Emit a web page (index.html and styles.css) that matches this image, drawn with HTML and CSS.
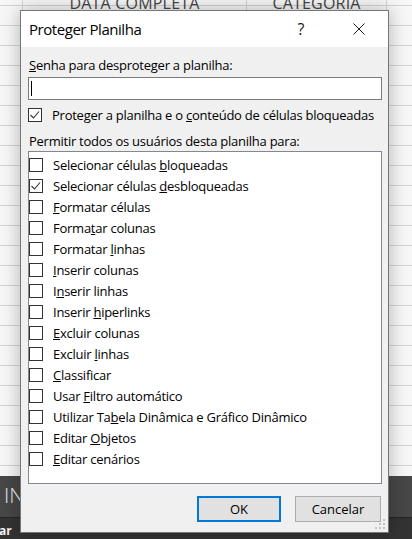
FILE: index.html
```html
<!DOCTYPE html>
<html lang="pt">
<head>
<meta charset="utf-8">
<title>Proteger Planilha</title>
<link rel="stylesheet" href="styles.css">
</head>
<body>
<div class="sheet">
  <div class="grid">
    <div class="col c0"></div>
    <div class="col c1"><span class="hdr">DATA COMPLETA</span></div>
    <div class="col c2"><span class="hdr">CATEGORIA</span></div>
    <div class="col c3"></div>
  </div>
  <div class="ribbon"><span class="ribbon-text">IN</span></div>
  <div class="statusbar"><span class="status-text">ar</span></div>
</div>

<div class="dialog">
  <div class="titlebar">
    <span class="title">Proteger Planilha</span>
    <span class="tb-btn help">?</span>
    <span class="tb-btn close">
      <svg width="12" height="12" viewBox="0 0 12 12"><path d="M0.5 0.5 L11.5 11.5 M11.5 0.5 L0.5 11.5" stroke="#1a1a1a" stroke-width="1" fill="none"/></svg>
    </span>
  </div>
  <div class="body">
    <div class="label"><u>S</u>enha para desproteger a planilha:</div>
    <div class="input"><span class="caret"></span></div>
    <div class="check-row">
      <span class="cb"><svg width="14" height="14" viewBox="0 0 14 14"><path d="M2.5 7 L5.5 10 L11 3.5" stroke="#333" stroke-width="1.1" fill="none"/></svg></span>
      <span>Proteger a planilha e o <u>c</u>onteúdo de células bloqueadas</span>
    </div>
    <div class="label permit">Permitir todos os usuários desta planilha para:</div>
    <div class="list">
      <div class="item"><span class="cb"></span><span>Selecionar células <u>b</u>loqueadas</span></div>
      <div class="item"><span class="cb"><svg width="14" height="14" viewBox="0 0 14 14"><path d="M2.5 7 L5.5 10 L11 3.5" stroke="#333" stroke-width="1.1" fill="none"/></svg></span><span>Selecionar células <u>d</u>esbloqueadas</span></div>
      <div class="item"><span class="cb"></span><span><u>F</u>ormatar células</span></div>
      <div class="item"><span class="cb"></span><span>Forma<u>t</u>ar colunas</span></div>
      <div class="item"><span class="cb"></span><span>Formatar <u>l</u>inhas</span></div>
      <div class="item"><span class="cb"></span><span><u>I</u>nserir colunas</span></div>
      <div class="item"><span class="cb"></span><span>I<u>n</u>serir linhas</span></div>
      <div class="item"><span class="cb"></span><span>Inserir <u>h</u>iperlinks</span></div>
      <div class="item"><span class="cb"></span><span><u>E</u>xcluir colunas</span></div>
      <div class="item"><span class="cb"></span><span>Excluir <u>l</u>inhas</span></div>
      <div class="item"><span class="cb"></span><span><u>C</u>lassificar</span></div>
      <div class="item"><span class="cb"></span><span>Usar <u>F</u>iltro automático</span></div>
      <div class="item"><span class="cb"></span><span>Utilizar Ta<u>b</u>ela Dinâmica e Gráfico Dinâmico</span></div>
      <div class="item"><span class="cb"></span><span>Editar <u>O</u>bjetos</span></div>
      <div class="item"><span class="cb"></span><span><u>E</u>ditar cenários</span></div>
    </div>
    <div class="footer">
      <span class="btn default">OK</span>
      <span class="btn">Cancelar</span>
    </div>
  </div>
  <svg class="grip" width="12" height="12" viewBox="0 0 12 12">
    <rect x="8" y="0" width="2" height="2" fill="#c2c2c2"/>
    <rect x="4" y="4" width="2" height="2" fill="#c2c2c2"/>
    <rect x="8" y="4" width="2" height="2" fill="#c2c2c2"/>
    <rect x="0" y="8" width="2" height="2" fill="#c2c2c2"/>
    <rect x="4" y="8" width="2" height="2" fill="#c2c2c2"/>
    <rect x="8" y="8" width="2" height="2" fill="#c2c2c2"/>
  </svg>
</div>
</body>
</html>
```
FILE: styles.css
```css
* { box-sizing: border-box; }
html, body { margin: 0; padding: 0; }
body {
  width: 412px;
  height: 539px;
  overflow: hidden;
  position: relative;
  font-family: "Open Sans", "Noto Sans", sans-serif;
  background: #fff;
}

/* background spreadsheet */
.sheet {
  height: 539px;
  display: flex;
  flex-direction: column;
}
.grid {
  height: 476px;
  display: flex;
  background-color: #f7f7f7;
  background-image: repeating-linear-gradient(to bottom,
    transparent 0, transparent 5px,
    #d4d4d4 5px, #d4d4d4 6px,
    transparent 6px, transparent 20px);
}
.col {
  border-right: 1px solid #d4d4d4;
  display: flex;
  justify-content: center;
}
.c0 { width: 23px; }
.c1 { width: 224px; }
.c2 { width: 140px; }
.c3 { flex: 1; border-right: 0; }
.hdr {
  font-size: 16px;
  line-height: 6px;
  color: #454545;
  letter-spacing: 0.2px;
}
.ribbon {
  height: 41px;
  background: #474747;
  padding-left: 4px;
}
.ribbon-text {
  color: #e6e6e6;
  font-size: 21px;
  line-height: 38px;
  font-weight: 300;
}
.statusbar {
  height: 22px;
  background: #333;
  border-top: 1px solid #262626;
}
.status-text {
  color: #f2f2f2;
  font-size: 12px;
  font-weight: 700;
  line-height: 22px;
  margin-left: -1px;
}

/* dialog */
.dialog {
  position: absolute;
  left: 20px;
  top: 10px;
  width: 369px;
  height: 523px;
  background: #f0f0f0;
  border: 1px solid #767676;
  box-shadow: 0 0 18px rgba(0, 0, 0, 0.28);
  color: #000;
}
.titlebar {
  height: 36px;
  background: #fff;
  display: flex;
  align-items: center;
}
.title {
  flex: 1;
  padding-left: 8px;
  font-size: 15px;
  letter-spacing: -0.45px;
  color: #000;
}
.tb-btn {
  width: 58px;
  height: 36px;
  display: flex;
  align-items: center;
  justify-content: center;
}
.help {
  font-size: 16px;
  color: #1a1a1a;
}
.body {
  padding: 0 6px 0 7px;
  display: flex;
  flex-direction: column;
  font-size: 13px;
  letter-spacing: -0.25px;
}
.label {
  margin-top: 9px;
  line-height: 18px;
  padding-left: 1px;
}
.label.permit { margin-top: 8px; }
.input {
  margin-top: 3px;
  height: 23px;
  background: #fff;
  border: 1px solid #7a7a7a;
  padding: 3px 0 0 2px;
}
.caret {
  display: block;
  width: 1px;
  height: 15px;
  background: #000;
}
.check-row {
  margin-top: 6px;
  height: 18px;
  display: flex;
  align-items: center;
  gap: 10px;
}
.cb {
  width: 14px;
  height: 14px;
  border: 1px solid #333;
  background: #fff;
  flex: none;
  position: relative;
}
.cb svg {
  position: absolute;
  left: -1px;
  top: -1px;
}
.list {
  margin-top: 1px;
  height: 333px;
  background: #fff;
  border: 1px solid #828790;
  padding: 2px 0 0 0;
}
.item {
  height: 21px;
  display: flex;
  align-items: center;
  gap: 10px;
}
.footer {
  margin-top: 12px;
  display: flex;
  justify-content: flex-end;
  gap: 14px;
  padding-right: 1px;
}
.btn {
  width: 86px;
  height: 26px;
  background: #e1e1e1;
  border: 1px solid #adadad;
  display: flex;
  align-items: center;
  justify-content: center;
  letter-spacing: 0;
}
.btn.default {
  width: 84px;
  border: 2px solid #0078d7;
}
.grip {
  position: absolute;
  right: 1px;
  bottom: 1px;
}
```
